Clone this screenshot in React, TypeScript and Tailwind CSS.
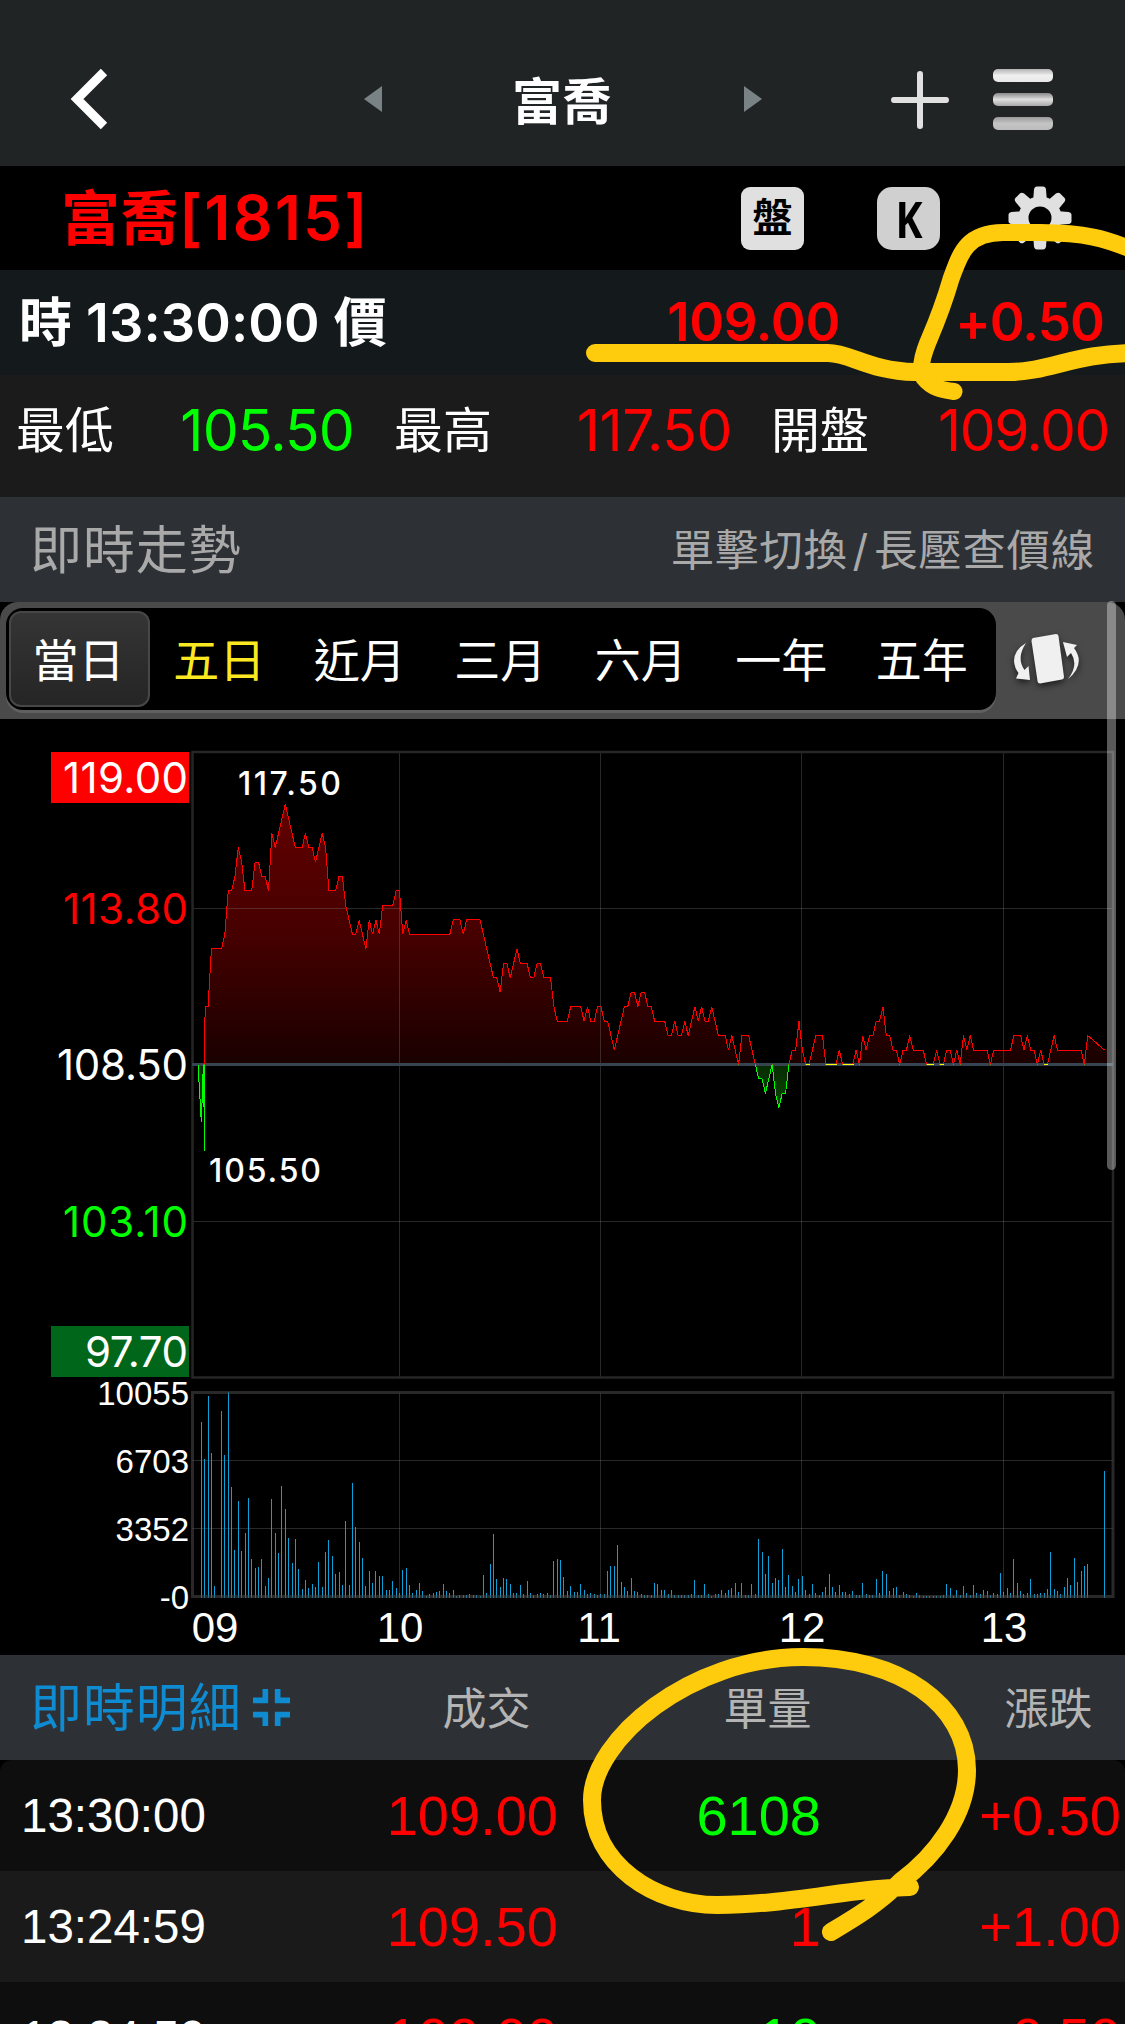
import React from "react";

const CJK = "font-['Inter','Noto_Sans_CJK_TC',sans-serif]";
const INTER = "Inter, sans-serif";
const HELV = "'Liberation Sans', sans-serif";

const TABS = ["當日", "五日", "近月", "三月", "六月", "一年", "五年"];

interface Tick {
  time: string;
  price: string;
  volume: string;
  change: string;
  isSell: boolean;
}

const TICKS: Tick[] = [
  { time: "13:30:00", price: "109.00", volume: "6108", change: "+0.50", isSell: true },
  { time: "13:24:59", price: "109.50", volume: "1", change: "+1.00", isSell: false },
  { time: "13:24:59", price: "109.00", volume: "10", change: "+0.50", isSell: true },
];

// [minute, price steps of 0.50 from the reference price]
const PRICES: [number, number][] = [
  [0, 0], [1, -4], [1.6, 0], [2, -6], [2.1, 4], [3, 4], [4, 8], [7, 8], [8, 9], [9, 12], [10, 12],
  [11, 13], [12, 15], [13, 14], [14, 12], [16, 12], [17, 14], [18, 14], [19, 13], [20, 13], [21, 12],
  [22, 16], [23, 15], [24, 16], [26, 18], [27, 17], [29, 15], [31, 15], [32, 16], [33, 15], [34, 15],
  [35, 14], [37, 16], [38, 15], [39, 12], [41, 12], [42, 13], [43, 13], [44, 11], [46, 9], [47, 9],
  [48, 10], [50, 8], [51, 10], [52, 9], [53, 10], [54, 9], [55, 11], [58, 11], [59, 12], [60, 12],
  [61, 9], [62, 10], [63, 9], [75, 9], [76, 10], [78, 10], [79, 9], [80, 10], [84, 10], [88, 6],
  [89, 6], [90, 5], [91, 7], [92, 7], [93, 6], [95, 8], [96, 7], [98, 7], [99, 6], [100, 6],
  [101, 7], [102, 7], [103, 6], [105, 6], [106, 4], [107, 3], [110, 3], [111, 4], [114, 4], [115, 3],
  [116, 4], [117, 3], [118, 3], [119, 4], [120, 4], [121, 3], [122, 3], [124, 1], [125, 2], [127, 4],
  [128, 4], [129, 5], [130, 5], [131, 4], [132, 5], [133, 5], [134, 4], [135, 4], [136, 3], [139, 3],
  [140, 2], [141, 2], [142, 3], [143, 2], [144, 2], [145, 3], [146, 2], [148, 4], [149, 3], [150, 4],
  [151, 3], [152, 3], [153, 4], [155, 2], [157, 2], [158, 1], [159, 2], [161, 0], [162, 2], [164, 2],
  [166, 0], [167, -1], [168, -1], [169, -2], [171, 0], [172, -2], [173, -3], [174, -2], [175, -2],
  [176, 0], [177, 1], [178, 1], [179, 3], [180, 1], [181, 0], [182, 0], [184, 2], [186, 2], [187, 0],
  [190, 0], [191, 1], [192, 0], [195, 0], [196, 1], [197, 0], [198, 2], [199, 1], [200, 2], [201, 2],
  [202, 3], [203, 3], [204, 4], [205, 2], [206, 2], [207, 1], [208, 1], [209, 0], [210, 1], [211, 1],
  [212, 2], [213, 1], [216, 1], [217, 0], [219, 0], [220, 1], [221, 0], [222, 0], [223, 1], [224, 1],
  [225, 0], [226, 1], [227, 0], [228, 2], [229, 1], [230, 2], [231, 1], [235, 1], [236, 0], [237, 1],
  [242, 1], [243, 2], [245, 2], [246, 1], [247, 2], [248, 1], [249, 1], [250, 0], [251, 1], [252, 0],
  [253, 0], [255, 2], [256, 1], [263, 1], [264, 0], [265, 2], [270, 1],
];

// bar height per minute, from 09:01
const VOLUMES = [
  176, 139, 202, 145, 12, 0, 187, 143, 206, 111, 48, 97, 47, 65, 100, 39, 30, 31, 39, 12, 20, 99, 65,
  45, 112, 89, 60, 35, 59, 29, 9, 18, 10, 14, 11, 36, 11, 46, 58, 42, 24, 26, 13, 77, 13, 115, 71, 56,
  40, 12, 27, 15, 27, 22, 22, 8, 8, 17, 10, 5, 28, 30, 13, 5, 8, 15, 7, 2, 4, 5, 6, 7, 14, 7, 5, 8, 2,
  3, 3, 3, 4, 3, 3, 2, 23, 5, 34, 64, 19, 11, 20, 19, 14, 5, 5, 13, 4, 17, 5, 3, 4, 5, 4, 5, 3, 37,
  39, 38, 21, 7, 12, 6, 6, 14, 8, 4, 5, 4, 3, 4, 4, 27, 32, 32, 53, 16, 11, 7, 20, 7, 6, 4, 3, 3, 3,
  15, 14, 8, 8, 4, 8, 3, 3, 3, 3, 3, 4, 18, 3, 3, 14, 4, 2, 4, 4, 8, 5, 8, 10, 15, 6, 15, 3, 3, 14,
  4, 59, 46, 24, 42, 15, 20, 18, 49, 11, 23, 12, 6, 19, 22, 8, 4, 14, 5, 3, 6, 11, 24, 11, 6, 13, 6,
  6, 4, 7, 3, 3, 15, 4, 3, 3, 19, 5, 27, 24, 7, 10, 11, 3, 6, 4, 3, 2, 5, 3, 2, 2, 2, 2, 2, 2, 3, 14,
  10, 2, 8, 3, 12, 5, 3, 13, 5, 4, 8, 7, 3, 5, 4, 25, 6, 10, 5, 39, 15, 7, 4, 5, 19, 4, 4, 5, 5, 9,
  46, 9, 7, 4, 11, 20, 13, 40, 16, 27, 32, 34, 0, 0, 0, 0, 127,
];

const BASE = 345.5;
const xOf = (m: number) => 198 + m * 3.3575;
const yOf = (step: number) => BASE - step * 14.46;

const Header = () => (
  <header className="flex h-[166px] items-start bg-[#212425] pt-[68px]">
    <svg width="40" height="62" viewBox="0 0 40 62" className="ml-[69px]">
      <path d="M35 4 8 31 35 58" fill="none" stroke="#fff" strokeWidth="9" />
    </svg>
    <svg width="18" height="26" viewBox="0 0 18 26" className="ml-[255px] mt-[18px]">
      <path d="M18 0V26L0 13Z" fill="#798386" />
    </svg>
    <h1 className="ml-[130px] -mt-[2px] w-[102px] text-[50px] font-bold leading-[72px] text-white">富喬</h1>
    <svg width="18" height="26" viewBox="0 0 18 26" className="ml-[130px] mt-[18px]">
      <path d="M0 0V26L18 13Z" fill="#798386" />
    </svg>
    <svg width="58" height="58" viewBox="0 0 58 58" className="ml-[129px] mt-[3px]">
      <path d="M29 3V55M3 29H55" stroke="#e0e0e0" strokeWidth="6" strokeLinecap="round" />
    </svg>
    <div className="ml-[44px] mt-[1px] flex flex-col gap-[11px]">
      <span className="h-[13px] w-[60px] rounded-[5px] bg-linear-to-b from-[#b4b4b4] via-[#f0f0f0] to-[#e8e8e8]" />
      <span className="h-[13px] w-[60px] rounded-[5px] bg-linear-to-b from-[#8a8a8a] via-[#dedede] to-[#a8a8a8]" />
      <span className="h-[13px] w-[60px] rounded-[5px] bg-linear-to-b from-[#9a9a9a] via-[#c4c4c4] to-[#bcbcbc]" />
    </div>
  </header>
);

const StockBar = () => (
  <section className="flex h-[104px] items-center bg-black pl-[61px]">
    <h2 className="w-[680px] text-[59px] font-semibold leading-none text-[#ff0000]">
      富喬<span className="text-[62px] tracking-[2.200px]">[1815]</span>
    </h2>
    <div className="flex h-[63px] w-[63px] items-center justify-center rounded-[9px] bg-[#e0e0e0] text-[40px] font-bold leading-none text-black">
      盤
    </div>
    <div className="ml-[73px] flex h-[63px] w-[63px] items-center justify-center rounded-[15px] bg-[#d0d0d0] text-[51px] font-bold leading-none text-black">
      <span className="scale-x-[0.8] font-['Open_Sans',sans-serif] font-bold">K</span>
    </div>
    <svg width="64" height="64" viewBox="-32 -32 64 64" className="ml-[68px]">
      <g fill="#e0e0e0">
        {[0, 45, 90, 135, 180, 225, 270, 315].map((deg) => (
          <path key={deg} transform={`rotate(${deg})`} d="M-7-16L-6-28.500Q-5.500-31.500-3-31.500H3Q5.500-31.500 6-28.500L7-16Z" />
        ))}
      </g>
      <circle r="16.500" fill="none" stroke="#e0e0e0" strokeWidth="10" />
    </svg>
  </section>
);

const QuoteRows = () => (
  <>
    <section className="flex h-[105px] items-center bg-[#14191b] text-[53px] leading-none">
      <span className="ml-[19px] w-[520px] text-[53px] font-bold text-white">
        時<span className="ml-[14px] mr-[14px] text-[54px] font-semibold tracking-[0.1px]">13:30:00</span>價
      </span>
      <span className="w-[301px] text-right font-semibold tracking-[-0.4px] text-[#ff0000]">109.00</span>
      <span className="w-[264px] text-right font-semibold tracking-[-1px] text-[#ff0000]">+0.50</span>
    </section>
    <section className="flex h-[122px] items-center bg-[#1b1b1b] pb-[11px] text-[49px] leading-none text-white">
      <span className="ml-[16px] w-[98px]">最低</span>
      <span className="w-[240px] text-right text-[57px] tracking-[-0.8px] text-[#00ff00]">105.50</span>
      <span className="ml-[40px] w-[98px]">最高</span>
      <span className="w-[240px] text-right text-[57px] tracking-[-0.4px] text-[#ff0000]">117.50</span>
      <span className="ml-[39px] w-[98px]">開盤</span>
      <span className="w-[240px] text-right text-[57px] tracking-[-1.5px] text-[#ff0000]">109.00</span>
    </section>
  </>
);

const TrendTabs = () => (
  <>
    <section className="flex h-[105px] items-center justify-between bg-[#2d3135] pl-[30px] pr-[30px] pt-[2px] leading-none text-[#a9a9a9]">
      <span className="text-[52px] tracking-[0.9px]">即時走勢</span>
      <span className="text-[43.500px] tracking-[0.7px]">
        單擊切換<span className="mx-[5px]">/</span>長壓查價線
      </span>
    </section>
    <nav className="flex h-[117px] rounded-t-[18px] bg-[#4a4a4a] pl-[6px] pt-[6px]">
      <div className="flex h-[102px] w-[990px] rounded-[17px] bg-black px-[3px] py-[3px] shadow-[0_3px_0_#606060]">
        {TABS.map((tab, i) => (
          <button
            key={tab}
            className={
              i === 0
                ? "h-[96px] w-[141px] rounded-[12px] border-2 border-[#474747] bg-linear-to-b from-[#353535] to-[#252525] pr-[2px] pt-[2px] text-[46px] leading-none text-white"
                : i === 1
                  ? "w-[140.500px] pr-[2px] pt-[2px] text-[46px] leading-none text-[#fbe820]"
                  : "w-[140.500px] pr-[2px] pt-[2px] text-[46px] leading-none text-white"
            }
          >
            {tab}
          </button>
        ))}
      </div>
      <svg width="70" height="64" viewBox="0 0 70 64" className="ml-[16px] mt-[21px] drop-shadow-[0_3px_3px_rgba(0,0,0,0.6)]">
        <path d="M21 9 44 5Q46 5 46.500 7L52 48Q52 50 50 50.500L28 54.500Q26 54.500 25.600 52.500L19.500 12Q19.500 9.500 21 9Z" fill="#f0f0f0" />
        <path d="M14 14Q2 21 2 32Q2.500 39 6.500 44L4 49.500 18 51 16.500 37 12.500 41Q4 29 14 14Z" fill="#f0f0f0" />
        <path d="M51 13 65 16 62 19Q74 35 56 50Q67 36 59 24L55 28Z" fill="#f0f0f0" />
      </svg>
    </nav>
  </>
);

const Chart = () => {
  const points = PRICES.map(([m, s]) => `${xOf(m)},${yOf(s)}`).join(" ");
  const area = `${xOf(0)},${BASE} ${points} 1107,${yOf(1)} 1107,${BASE}`;
  const flats = PRICES.slice(1)
    .map((p, i) => [PRICES[i], p])
    .filter(([a, b]) => a[1] === 0 && b[1] === 0);

  return (
    <svg width="1125" height="936" viewBox="0 0 1125 936" className="block bg-black">
      <defs>
        <linearGradient id="up" gradientUnits="userSpaceOnUse" x1="0" y1="85" x2="0" y2={BASE}>
          <stop offset="0" stopColor="#620000" />
          <stop offset="0.5" stopColor="#460000" />
          <stop offset="1" stopColor="#1a0000" />
        </linearGradient>
        <linearGradient id="down" gradientUnits="userSpaceOnUse" x1="0" y1={BASE} x2="0" y2="390">
          <stop offset="0" stopColor="#062a00" />
          <stop offset="1" stopColor="#0a4a00" />
        </linearGradient>
        <clipPath id="above">
          <rect width="1125" height={BASE + 0.5} />
        </clipPath>
        <clipPath id="below">
          <rect y={BASE} width="1125" height="500" />
        </clipPath>
      </defs>

      {/* price area */}
      <polygon points={area} fill="url(#up)" clipPath="url(#above)" />
      <polygon points={area} fill="url(#down)" clipPath="url(#below)" />
      <g stroke="#888" strokeOpacity="0.3" shapeRendering="crispEdges">
        {[399.5, 600.5, 801.5, 1003.5].map((x) => (
          <path key={x} d={`M${x} 33V659M${x} 674V878`} />
        ))}
        {[189.5, 502.5, 741.5, 809.5].map((y) => (
          <path key={y} d={`M192 ${y}H1113`} />
        ))}
      </g>
      <rect x="192.500" y="33" width="920.500" height="625.500" fill="none" stroke="#262626" strokeWidth="2.500" />
      <path d="M192 345.500H1113" stroke="#364350" strokeWidth="3" />
      <g fill="none" strokeWidth="1" shapeRendering="crispEdges">
        <polyline points={points} stroke="#ff0000" clipPath="url(#above)" />
        <polyline points={points} stroke="#00ff00" clipPath="url(#below)" />
        {flats.map(([a, b]) => (
          <path key={a[0]} d={`M${xOf(a[0])} 345.500H${xOf(b[0]) + 1}`} stroke="#ffff00" />
        ))}
      </g>

      {/* volume */}
      <g fill="#0aa0d8" shapeRendering="crispEdges">
        {VOLUMES.map((h, i) => (
          <rect key={i} x={Math.floor(xOf(i + 1))} y={879 - h} width="1" height={h} />
        ))}
      </g>
      <rect x="192.500" y="673.500" width="920.500" height="204" fill="none" stroke="#4a4a4a" strokeOpacity="0.550" strokeWidth="3" />

      {/* axis labels */}
      <rect x="51" y="33" width="138" height="51" fill="#ff0000" />
      <rect x="51" y="607" width="138" height="51" fill="#00661a" />
      <g fontFamily={INTER} fontSize="42" fill="#fff">
        <text x="63" y="74" textLength="125">119.00</text>
        <text x="63" y="205" textLength="125" fill="#ff0000">113.80</text>
        <text x="57" y="361" textLength="131">108.50</text>
        <text x="63" y="518" textLength="125" fill="#00ff00">103.10</text>
        <text x="85" y="648" textLength="103">97.70</text>
      </g>
      <g fontFamily={INTER} fontSize="32" fontWeight="500" fill="#fff">
        <text x="238" y="76" textLength="103">117.50</text>
        <text x="209" y="463" textLength="112">105.50</text>
      </g>
      <g fontFamily={HELV} fontSize="33" fill="#fff" textAnchor="end">
        <text x="189" y="686">10055</text>
        <text x="189" y="754">6703</text>
        <text x="189" y="822">3352</text>
        <text x="189" y="890">-0</text>
      </g>
      <g fontFamily={HELV} fontSize="42" fill="#fff" textAnchor="middle">
        <text x="215" y="923">09</text>
        <text x="400" y="923">10</text>
        <text x="599" y="923">11</text>
        <text x="802" y="923">12</text>
        <text x="1004" y="923">13</text>
      </g>
    </svg>
  );
};

const Details = () => (
  <>
    <section className="flex h-[105px] items-center bg-[#2d3135] pt-[2px] leading-none text-[#b4b4b4]">
      <span className="ml-[30px] text-[52px] tracking-[0.9px] text-[#0f8bd2]">即時明細</span>
      <svg width="37" height="37" viewBox="0 0 36 36" className="-mt-[2px] ml-[11px]">
        <path d="M12 0V13.500M0 11H14.500M24 0V13.500M21.500 11H36M12 36V23M0 25H14.500M24 36V23M21.500 25H36" stroke="#0f8bd2" strokeWidth="5.500" />
      </svg>
      <span className="w-[241px] text-right text-[44px]">成交</span>
      <span className="w-[281px] text-right text-[44px]">單量</span>
      <span className="w-[281px] text-right text-[44px]">漲跌</span>
    </section>
    <ul className="rounded-t-[12px] bg-black">
      {TICKS.map((tick, i) => (
        <li
          key={i}
          className={
            i % 2 === 0
              ? "flex h-[111px] items-center bg-[#0e0e0e] font-['Liberation_Sans',sans-serif] text-[56px] leading-none text-[#ff0000] first:rounded-t-[12px]"
              : "flex h-[111px] items-center bg-[#1a1a1a] font-['Liberation_Sans',sans-serif] text-[56px] leading-none text-[#ff0000]"
          }
        >
          <span className="ml-[21px] w-[239px] text-[47.500px] text-white">{tick.time}</span>
          <span className="w-[298px] text-right">{tick.price}</span>
          <span className={tick.isSell ? "w-[263px] text-right text-[#00ff00]" : "w-[263px] text-right"}>{tick.volume}</span>
          <span className="w-[300px] text-right">{tick.change}</span>
        </li>
      ))}
    </ul>
  </>
);

// freehand marker strokes drawn over the screen
const Marker = () => (
  <svg width="1125" height="2024" viewBox="0 0 1125 2024" className="pointer-events-none absolute left-0 top-0 blur-[0.7px]">
    <g fill="none" stroke="#ffcc0d" strokeWidth="18" strokeLinecap="round" strokeLinejoin="round">
      <path d="M595 353H828C850 353 870 371 915 372H1008C1050 372 1075 353 1135 353" />
      <path d="M1135 251C1105 238 1085 233 1040 232.500H1003C965 233 960 255 951 279C942 310 934 328 928 342C920 362 920 372 924 378C932 388 942 390 954 391.500" strokeWidth="17" />
      <path d="M831 1932C856 1917 878 1904 900 1882C935 1856 967 1815 967 1770C967 1705 900 1657 803 1657C690 1657 592 1740 592 1800C592 1865 655 1905 717 1905C790 1905 850 1888 910 1887" />
    </g>
  </svg>
);

export default function App() {
  return (
    <main className={`relative h-[2024px] w-[1125px] overflow-hidden bg-black ${CJK}`}>
      <Header />
      <StockBar />
      <QuoteRows />
      <TrendTabs />
      <Chart />
      <Details />
      {/* scroll thumb */}
      <div className="absolute right-[9px] top-[601px] h-[569px] w-[9px] rounded-full bg-white/35" />
      <Marker />
    </main>
  );
}
